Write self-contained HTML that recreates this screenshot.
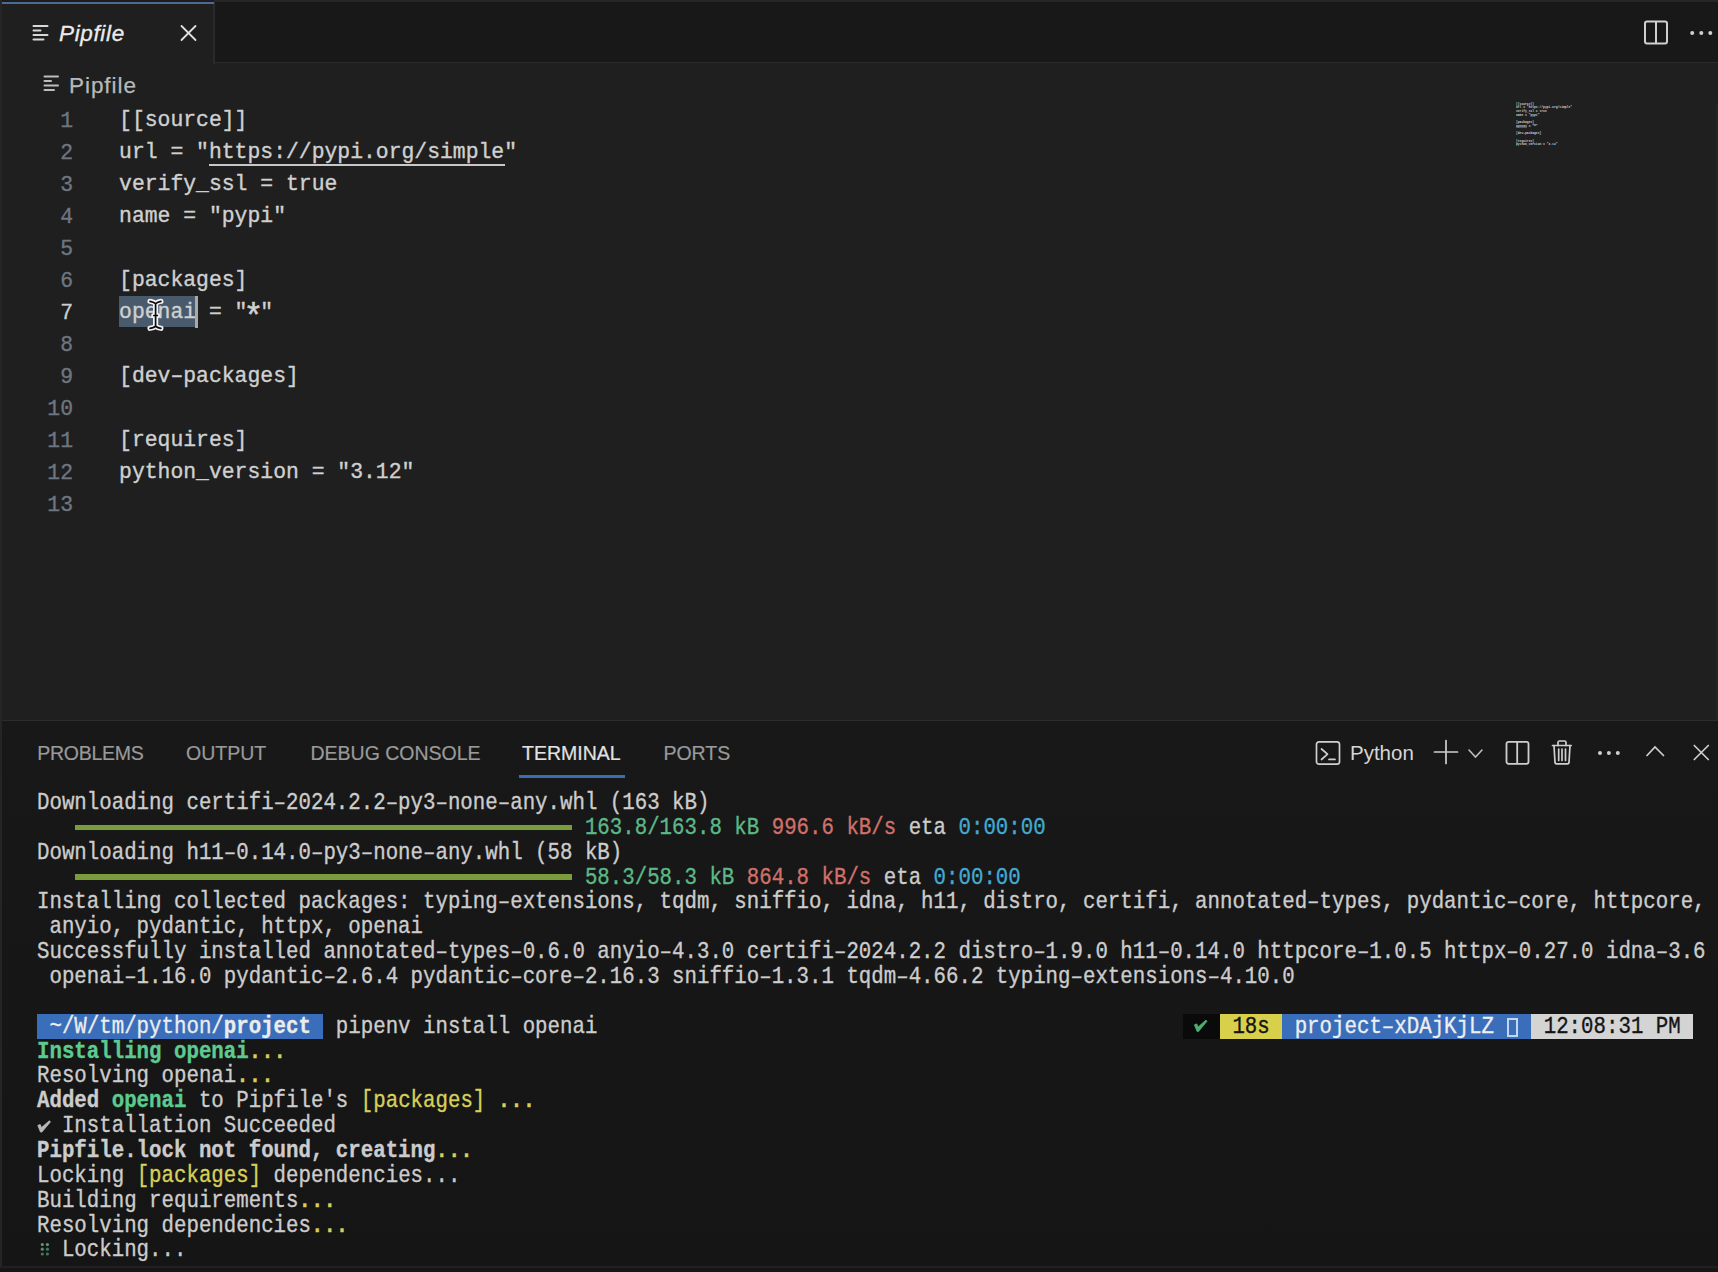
<!DOCTYPE html>
<html><head><meta charset="utf-8">
<style>
*{margin:0;padding:0;box-sizing:border-box}
html,body{width:1718px;height:1272px;overflow:hidden;background:#1f1f1f}
body{position:relative;font-family:"Liberation Sans",sans-serif}
.abs{position:absolute}
.ui{font-family:"Liberation Sans",sans-serif;white-space:pre}
.code{font-family:"Liberation Mono",monospace;font-size:21.4px;line-height:32px;white-space:pre;color:#d0d0d0;left:119.1px;-webkit-text-stroke:0.35px #d0d0d0;transform:scaleY(1.05);transform-origin:0 14px}
.ast{display:inline-block;transform:translateY(6px) scale(1.55)}
.dash{}
.ln{font-family:"Liberation Mono",monospace;font-size:21.4px;line-height:32px;white-space:pre;color:#6e7681;-webkit-text-stroke:0.35px currentColor;transform:translateY(0.5px) scaleY(1.06);transform-origin:0 14px;text-align:right;width:60px;left:13px}
.t{font-family:"Liberation Mono",monospace;font-size:20.75px;line-height:24.86px;white-space:pre;color:#cccccc;left:37px;-webkit-text-stroke:0.3px currentColor;transform:scaleY(1.15);transform-origin:0 2px}
.mm{font-family:"Liberation Mono",monospace;font-size:21.4px;line-height:26.3px;white-space:pre;color:#d0d0d0;font-weight:bold}
.ptab{font-size:19.5px;color:#9a9a9a;top:741.3px;line-height:24px;-webkit-text-stroke:0.2px currentColor}
</style></head><body>
<div class="abs" style="left:2px;top:0;width:1716px;height:63px;background:#181818;border-bottom:1px solid #2b2b2b"></div>
<div class="abs" style="left:2px;top:0;width:213px;height:64px;background:#1f1f1f;border-right:2px solid #2a2a2a"></div>
<div class="abs" style="left:2px;top:2px;width:212px;height:2px;background:#4a6c94"></div>
<div class="abs" style="left:214px;top:0;width:1504px;height:2px;background:#262626"></div>
<div class="abs" style="left:1716px;top:103px;width:2px;height:617px;background:#242424"></div>
<div class="abs" style="left:2px;top:0;width:212px;height:2px;background:#1c1c1c"></div>
<div class="abs" style="left:0;top:0;width:2px;height:1272px;background:#252525"></div>
<div class="abs" style="left:2px;top:720.2px;width:1716px;height:545.8px;background:linear-gradient(#181818,#171717 30%,#151515);border-top:1.6px solid #2c2c2c"></div>
<div class="abs" style="left:0;top:1266px;width:1718px;height:6px;background:#161616;border-top:2px solid #202020"></div>
<svg class="abs" style="left:31px;top:22px" width="20" height="22" viewBox="0 0 20 22">
<g stroke="#d8d8d8" stroke-width="2" stroke-linecap="round">
<line x1="2.5" y1="4" x2="16.5" y2="4"/><line x1="2.5" y1="8.5" x2="9.5" y2="8.5"/><line x1="2.5" y1="13" x2="16.5" y2="13"/><line x1="2.5" y1="17.5" x2="12.5" y2="17.5"/></g></svg>
<div class="abs ui" style="left:59px;top:20px;font-size:22.5px;line-height:28px;font-style:italic;color:#ececec;letter-spacing:0.65px;-webkit-text-stroke:0.3px #ececec">Pipfile</div>
<svg class="abs" style="left:178px;top:23px" width="20" height="20" viewBox="0 0 20 20"><g stroke="#e0e0e0" stroke-width="1.8" stroke-linecap="round"><line x1="3.5" y1="3" x2="17.5" y2="17"/><line x1="17.5" y1="3" x2="3.5" y2="17"/></g></svg>
<svg class="abs" style="left:1640px;top:16px" width="32" height="32" viewBox="0 0 32 32"><g fill="none" stroke="#cfcfcf" stroke-width="2"><rect x="5" y="5.5" width="22" height="22" rx="2"/><line x1="16" y1="5.5" x2="16" y2="27.5"/></g></svg>
<svg class="abs" style="left:1684px;top:25px" width="34" height="16" viewBox="0 0 34 16"><g fill="#cfcfcf"><circle cx="8.2" cy="8" r="2"/><circle cx="17.3" cy="8" r="2"/><circle cx="26.3" cy="8" r="2"/></g></svg>
<svg class="abs" style="left:41px;top:72px" width="20" height="22" viewBox="0 0 20 22">
<g stroke="#bdbdbd" stroke-width="2" stroke-linecap="round">
<line x1="3.5" y1="4.5" x2="17" y2="4.5"/><line x1="3.5" y1="9" x2="10" y2="9"/><line x1="3.5" y1="13.5" x2="17" y2="13.5"/><line x1="3.5" y1="18" x2="13" y2="18"/></g></svg>
<div class="abs ui" style="left:69px;top:71.6px;font-size:22.5px;line-height:28px;color:#b8b8b8;letter-spacing:0.95px;-webkit-text-stroke:0.25px #b8b8b8">Pipfile</div>
<div class="abs" style="left:119px;top:296px;width:76px;height:31px;background:#4a5a6d"></div>
<div class="abs ln" style="top:103.5px;color:#6e7681">1</div>
<div class="abs code" style="top:103.5px">[[source]]</div>
<div class="abs ln" style="top:135.5px;color:#6e7681">2</div>
<div class="abs code" style="top:135.5px">url = "https://pypi.org/simple"</div>
<div class="abs ln" style="top:167.5px;color:#6e7681">3</div>
<div class="abs code" style="top:167.5px">verify_ssl = true</div>
<div class="abs ln" style="top:199.5px;color:#6e7681">4</div>
<div class="abs code" style="top:199.5px">name = "pypi"</div>
<div class="abs ln" style="top:231.5px;color:#6e7681">5</div>
<div class="abs ln" style="top:263.5px;color:#6e7681">6</div>
<div class="abs code" style="top:263.5px">[packages]</div>
<div class="abs ln" style="top:295.5px;color:#cccccc">7</div>
<div class="abs code" style="top:295.5px">openai = "<span class=ast>*</span>"</div>
<div class="abs ln" style="top:327.5px;color:#6e7681">8</div>
<div class="abs ln" style="top:359.5px;color:#6e7681">9</div>
<div class="abs code" style="top:359.5px">[dev&#8211;packages]</div>
<div class="abs ln" style="top:391.5px;color:#6e7681">10</div>
<div class="abs ln" style="top:423.5px;color:#6e7681">11</div>
<div class="abs code" style="top:423.5px">[requires]</div>
<div class="abs ln" style="top:455.5px;color:#6e7681">12</div>
<div class="abs code" style="top:455.5px">python_version = "3.12"</div>
<div class="abs ln" style="top:487.5px;color:#6e7681">13</div>
<div class="abs" style="left:194.5px;top:295.5px;width:3px;height:32px;background:#a9a9a9"></div>
<svg class="abs" style="left:0;top:0;overflow:visible" width="1" height="1"><g fill="none" stroke-linecap="round" stroke-linejoin="round"><path d="M150 301.3 Q153.5 301.8 155.6 303.6 Q157.7 301.8 160.9 301.3 M155.6 303.6 V326.2 M150 328.3 Q153.5 327.8 155.6 326.2 Q157.7 327.8 160.9 328.3 M153.8 315.5 H157.4" stroke="#f4f4f4" stroke-width="5.2"/><path d="M150 301.3 Q153.5 301.8 155.6 303.6 Q157.7 301.8 160.9 301.3 M155.6 303.6 V326.2 M150 328.3 Q153.5 327.8 155.6 326.2 Q157.7 327.8 160.9 328.3 M153.8 315.5 H157.4" stroke="#0a0a0a" stroke-width="1.7"/></g></svg>
<div class="abs" style="left:209px;top:164px;width:295.5px;height:1.7px;background:#c8c8c8"></div>
<div class="abs mm" style="left:1516px;top:102px;width:400px;transform:scale(0.1407);transform-origin:0 0"><div style="height:26.3px">[[source]]</div><div style="height:26.3px">url = "https://pypi.org/simple"</div><div style="height:26.3px">verify_ssl = true</div><div style="height:26.3px">name = "pypi"</div><div style="height:26.3px">&nbsp;</div><div style="height:26.3px">[packages]</div><div style="height:26.3px">openai = "<span class=ast>*</span>"</div><div style="height:26.3px">&nbsp;</div><div style="height:26.3px">[dev&#8211;packages]</div><div style="height:26.3px">&nbsp;</div><div style="height:26.3px">[requires]</div><div style="height:26.3px">python_version = "3.12"</div><div style="height:26.3px">&nbsp;</div></div>
<div class="abs" style="left:1516px;top:124.8px;width:11px;height:3.4px;background:rgba(110,130,160,0.55)"></div>
<div class="abs ui ptab" style="letter-spacing:-0.25px;left:37.2px;color:#9a9a9a">PROBLEMS</div>
<div class="abs ui ptab" style="left:186.1px;color:#9a9a9a">OUTPUT</div>
<div class="abs ui ptab" style="left:310.5px;color:#9a9a9a">DEBUG CONSOLE</div>
<div class="abs ui ptab" style="left:522.0px;color:#e2e2e2">TERMINAL</div>
<div class="abs ui ptab" style="left:663.4px;color:#9a9a9a">PORTS</div>
<div class="abs" style="left:519px;top:775px;width:106px;height:2.5px;background:#3a6db0"></div>

<svg class="abs" style="left:1310px;top:736px" width="36" height="34" viewBox="0 0 36 34"><g fill="none" stroke="#cfcfcf" stroke-width="1.7" stroke-linecap="round" stroke-linejoin="round"><rect x="6.5" y="5.8" width="23" height="22.4" rx="2.5"/><polyline points="11.5,13 17.5,18.2 11.5,23.5"/><line x1="19" y1="23.4" x2="25" y2="23.4"/></g></svg>
<div class="abs ui" style="left:1350px;top:741.3px;font-size:20.5px;line-height:24px;color:#d6d6d6">Python</div>
<svg class="abs" style="left:1430px;top:736px" width="32" height="32" viewBox="0 0 32 32"><g stroke="#d0d0d0" stroke-width="1.7" stroke-linecap="round"><line x1="16" y1="4.5" x2="16" y2="27.5"/><line x1="4.5" y1="16" x2="27.5" y2="16"/></g></svg>
<svg class="abs" style="left:1465px;top:745px" width="21" height="16" viewBox="0 0 21 16"><polyline points="4,5 10.5,12 17,5" fill="none" stroke="#bdbdbd" stroke-width="1.6" stroke-linecap="round"/></svg>
<svg class="abs" style="left:1500px;top:736px" width="34" height="34" viewBox="0 0 34 34"><g fill="none" stroke="#cfcfcf" stroke-width="1.8"><rect x="6.5" y="5.8" width="22" height="22" rx="2"/><line x1="17.2" y1="5.8" x2="17.2" y2="27.8"/></g></svg>
<svg class="abs" style="left:1546px;top:736px" width="32" height="32" viewBox="0 0 32 32"><g fill="none" stroke="#cfcfcf" stroke-width="1.7" stroke-linejoin="round" stroke-linecap="round"><path d="M6.5 9.5 H25.2"/><path d="M12 9.5 V6.5 Q12 5 13.5 5 H18.5 Q20 5 20 6.5 V9.5"/><path d="M8 9.5 L9 26.5 Q9.2 27.8 10.5 27.8 H21.5 Q22.8 27.8 23 26.5 L24 9.5"/><line x1="12.7" y1="13" x2="12.7" y2="24.5"/><line x1="16" y1="13" x2="16" y2="24.5"/><line x1="19.5" y1="13" x2="19.5" y2="24.5"/></g></svg>
<svg class="abs" style="left:1592px;top:745px" width="34" height="16" viewBox="0 0 34 16"><g fill="#cfcfcf"><circle cx="8" cy="8" r="2"/><circle cx="16.9" cy="8" r="2"/><circle cx="25.8" cy="8" r="2"/></g></svg>
<svg class="abs" style="left:1640px;top:740px" width="30" height="22" viewBox="0 0 30 22"><polyline points="7,15.5 15,7 23.5,15.5" fill="none" stroke="#cfcfcf" stroke-width="1.7" stroke-linecap="round"/></svg>
<svg class="abs" style="left:1688px;top:740px" width="26" height="26" viewBox="0 0 26 26"><g stroke="#cfcfcf" stroke-width="1.7" stroke-linecap="round"><line x1="6.3" y1="5.5" x2="20.3" y2="19.5"/><line x1="20.3" y1="5.5" x2="6.3" y2="19.5"/></g></svg>

<div class="abs" style="left:37.00px;top:1013.74px;width:286.40px;height:24.86px;background:#3a6eba"></div>
<div class="abs" style="left:1182.58px;top:1013.74px;width:37.36px;height:24.86px;background:#0a0a0a"></div>
<div class="abs" style="left:1219.94px;top:1013.74px;width:62.26px;height:24.86px;background:#d8d04a"></div>
<div class="abs" style="left:1282.20px;top:1013.74px;width:249.04px;height:24.86px;background:#3a6eba"></div>
<div class="abs" style="left:1531.24px;top:1013.74px;width:161.88px;height:24.86px;background:#d4d4d4"></div>
<div class="abs t" style="top:790.00px">Downloading certifi&#8211;2024.2.2&#8211;py3&#8211;none&#8211;any.whl (163 kB)</div>
<div class="abs t" style="top:814.86px">                                            <span style="color:#5cb887">163.8/163.8 kB</span> <span style="color:#d0706a">996.6 kB/s</span> eta <span style="color:#44a9d0">0:00:00</span></div>
<div class="abs t" style="top:839.72px">Downloading h11&#8211;0.14.0&#8211;py3&#8211;none&#8211;any.whl (58 kB)</div>
<div class="abs t" style="top:864.58px">                                            <span style="color:#5cb887">58.3/58.3 kB</span> <span style="color:#d0706a">864.8 kB/s</span> eta <span style="color:#44a9d0">0:00:00</span></div>
<div class="abs t" style="top:889.44px">Installing collected packages: typing&#8211;extensions, tqdm, sniffio, idna, h11, distro, certifi, annotated&#8211;types, pydantic&#8211;core, httpcore,</div>
<div class="abs t" style="top:914.30px"> anyio, pydantic, httpx, openai</div>
<div class="abs t" style="top:939.16px">Successfully installed annotated&#8211;types&#8211;0.6.0 anyio&#8211;4.3.0 certifi&#8211;2024.2.2 distro&#8211;1.9.0 h11&#8211;0.14.0 httpcore&#8211;1.0.5 httpx&#8211;0.27.0 idna&#8211;3.6</div>
<div class="abs t" style="top:964.02px"> openai&#8211;1.16.0 pydantic&#8211;2.6.4 pydantic&#8211;core&#8211;2.16.3 sniffio&#8211;1.3.1 tqdm&#8211;4.66.2 typing&#8211;extensions&#8211;4.10.0</div>
<div class="abs t" style="top:1013.74px"><span style="color:#ececec"> ~/W/tm/python/<span style="font-weight:bold">project</span> </span> pipenv install openai                                                  <span style="color:#141414"> 18s </span><span style="color:#eeeeee"> project&#8211;xDAjKjLZ   </span><span style="color:#141414"> 12:08:31 PM </span></div>
<div class="abs t" style="top:1038.60px"><span style="color:#5dcb8f;font-weight:bold">Installing openai</span><span style="color:#d6d05a;font-weight:bold">...</span></div>
<div class="abs t" style="top:1063.46px">Resolving openai<span style="color:#d6d05a;font-weight:bold">...</span></div>
<div class="abs t" style="top:1088.32px"><span style="font-weight:bold">Added</span> <span style="color:#5dcb8f;font-weight:bold">openai</span> to Pipfile's <span style="color:#d6d05a">[packages]</span> <span style="color:#d6d05a;font-weight:bold">...</span></div>
<div class="abs t" style="top:1113.18px">  Installation Succeeded</div>
<div class="abs t" style="top:1138.04px"><span style="font-weight:bold">Pipfile.lock not found, creating</span><span style="color:#d6d05a;font-weight:bold">...</span></div>
<div class="abs t" style="top:1162.90px">Locking <span style="color:#d6d05a">[packages]</span> dependencies...</div>
<div class="abs t" style="top:1187.76px">Building requirements<span style="color:#d6d05a;font-weight:bold">...</span></div>
<div class="abs t" style="top:1212.62px">Resolving dependencies<span style="color:#d6d05a;font-weight:bold">...</span></div>
<div class="abs t" style="top:1237.48px">  Locking...</div>
<div class="abs" style="left:1507.3px;top:1018px;width:10.8px;height:19.2px;border:2px solid #c2d6ef"></div>
<svg class="abs" style="left:0;top:0;overflow:visible" width="1" height="1"><path d="M37.8 1125.4 L40.2 1124.5 L41.5 1127.6 L49.4 1120.7 L50.4 1121.9 L41.9 1132.1 L40.5 1132.1 Z" fill="#b8b8b8" stroke="#b8b8b8" stroke-width="0.8" stroke-linejoin="round"/><path transform="translate(1156.6,-100.6)" d="M37.8 1125.4 L40.2 1124.5 L41.5 1127.6 L49.4 1120.7 L50.4 1121.9 L41.9 1132.1 L40.5 1132.1 Z" fill="#4fae74" stroke="#4fae74" stroke-width="0.8" stroke-linejoin="round"/></svg>
<div class="abs" style="left:75.2px;top:824.66px;width:497.2px;height:5.8px;background:#7b9c3c"></div>
<div class="abs" style="left:75.2px;top:874.38px;width:497.2px;height:5.8px;background:#7b9c3c"></div>
<svg class="abs" style="left:0;top:0;overflow:visible" width="1" height="1"><circle cx="42.3" cy="1244.5" r="1.6" fill="#5a9a78"/><circle cx="47.4" cy="1244.5" r="1.6" fill="#5a9a78"/><circle cx="42.3" cy="1249.2" r="1.6" fill="#5d8a74"/><circle cx="47.4" cy="1249.2" r="1.6" fill="#3f7a5c"/><circle cx="42.3" cy="1254" r="1.6" fill="#3f7a5c"/><circle cx="47.4" cy="1254" r="1.6" fill="#3f7a5c"/></svg>
</body></html>
